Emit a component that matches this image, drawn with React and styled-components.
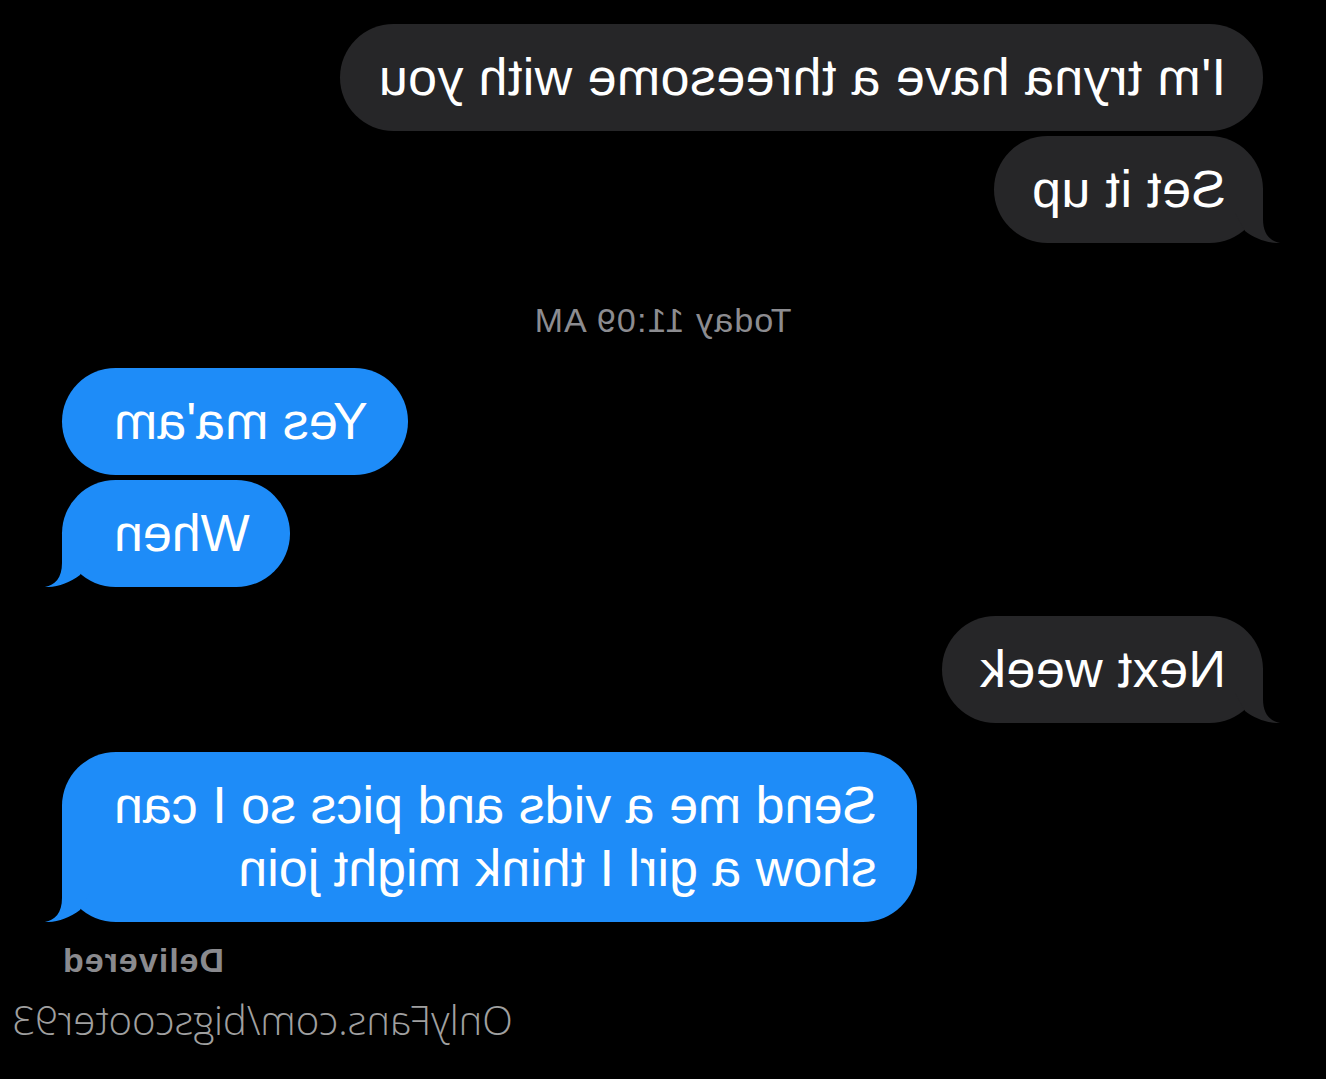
import React from "react";
import styled, { createGlobalStyle } from "styled-components";

const GlobalStyle = createGlobalStyle`
  html, body {
    margin: 0;
    padding: 0;
    background: #000;
  }
  body {
    font-family: "Liberation Sans", Arial, sans-serif;
  }
`;

const Screen = styled.div`
  width: 1326px;
  height: 1079px;
  overflow: hidden;
  background: #000;
  /* the reference is a horizontally mirrored screenshot */
  transform: scaleX(-1);
`;

const Thread = styled.div`
  display: flex;
  flex-direction: column;
  padding: 24px 62px 0 63px;
`;

const COLORS = {
  sent: "#1e8cf8",
  received: "#262628",
};

const Bubble = styled.div`
  position: relative;
  align-self: ${(p) => (p.$sent ? "flex-end" : "flex-start")};
  margin-top: ${(p) => p.$gap}px;
  background: ${(p) => (p.$sent ? COLORS.sent : COLORS.received)};
  color: #fff;
  font-size: 52px;
  line-height: 63px;
  letter-spacing: ${(p) => (p.$sent ? "0" : "0.4px")};
  padding: ${(p) => (p.$sent ? "22px 52px 22px 40px" : "22px 38px 22px 37px")};
  border-radius: 54px;
  white-space: pre-line;
  text-align: left;
`;

const TailSvg = styled.svg`
  position: absolute;
  bottom: 0;
  width: 50px;
  height: 55px;
  ${(p) =>
    p.$sent
      ? "right: -20px;"
      : "left: -20px; transform: scaleX(-1);"}
`;

const Tail = ({ sent }) => (
  <TailSvg $sent={sent} viewBox="-30 -55 50 55">
    <path
      d="M0 -55 L0 -24 C0 -9 7 -2 17 0 C6 0.5 -8 -4 -18 -12 L-28 -30 L-28 -55 Z"
      fill={sent ? COLORS.sent : COLORS.received}
    />
  </TailSvg>
);

const Timestamp = styled.div`
  align-self: center;
  margin-top: 57px;
  font-size: 34px;
  line-height: 40px;
  letter-spacing: 1.2px;
  color: #8c8c90;
`;

const Status = styled.div`
  align-self: flex-end;
  margin-top: 18px;
  font-size: 34px;
  line-height: 40px;
  letter-spacing: 1px;
  font-weight: 700;
  color: #8a8a8e;
`;

const Watermark = styled.div`
  align-self: flex-end;
  margin-top: 15px;
  margin-right: -50px;
  font-family: "Open Sans", "Noto Sans", sans-serif;
  font-weight: 300;
  font-size: 40px;
  line-height: 50px;
  color: #a0a0a0;
`;

const messages = [
  { text: "I'm tryna have a threesome with you", sent: false, gap: 0 },
  { text: "Set it up", sent: false, gap: 5, tail: true },
  { stamp: "Today 11:09 AM" },
  { text: "Yes ma'am", sent: true, gap: 28 },
  { text: "When", sent: true, gap: 5, tail: true },
  { text: "Next week", sent: false, gap: 29, tail: true },
  {
    text: "Send me a vids and pics so I can\nshow a girl I think might join",
    sent: true,
    gap: 29,
    tail: true,
  },
];

export default function App() {
  return (
    <>
      <GlobalStyle />
      <Screen>
        <Thread>
          {messages.map((m, i) =>
            m.stamp ? (
              <Timestamp key={i}>{m.stamp}</Timestamp>
            ) : (
              <Bubble key={i} $sent={m.sent} $gap={m.gap}>
                {m.text}
                {m.tail && <Tail sent={m.sent} />}
              </Bubble>
            )
          )}
          <Status>Delivered</Status>
          <Watermark>OnlyFans.com/bigscooter93</Watermark>
        </Thread>
      </Screen>
    </>
  );
}
